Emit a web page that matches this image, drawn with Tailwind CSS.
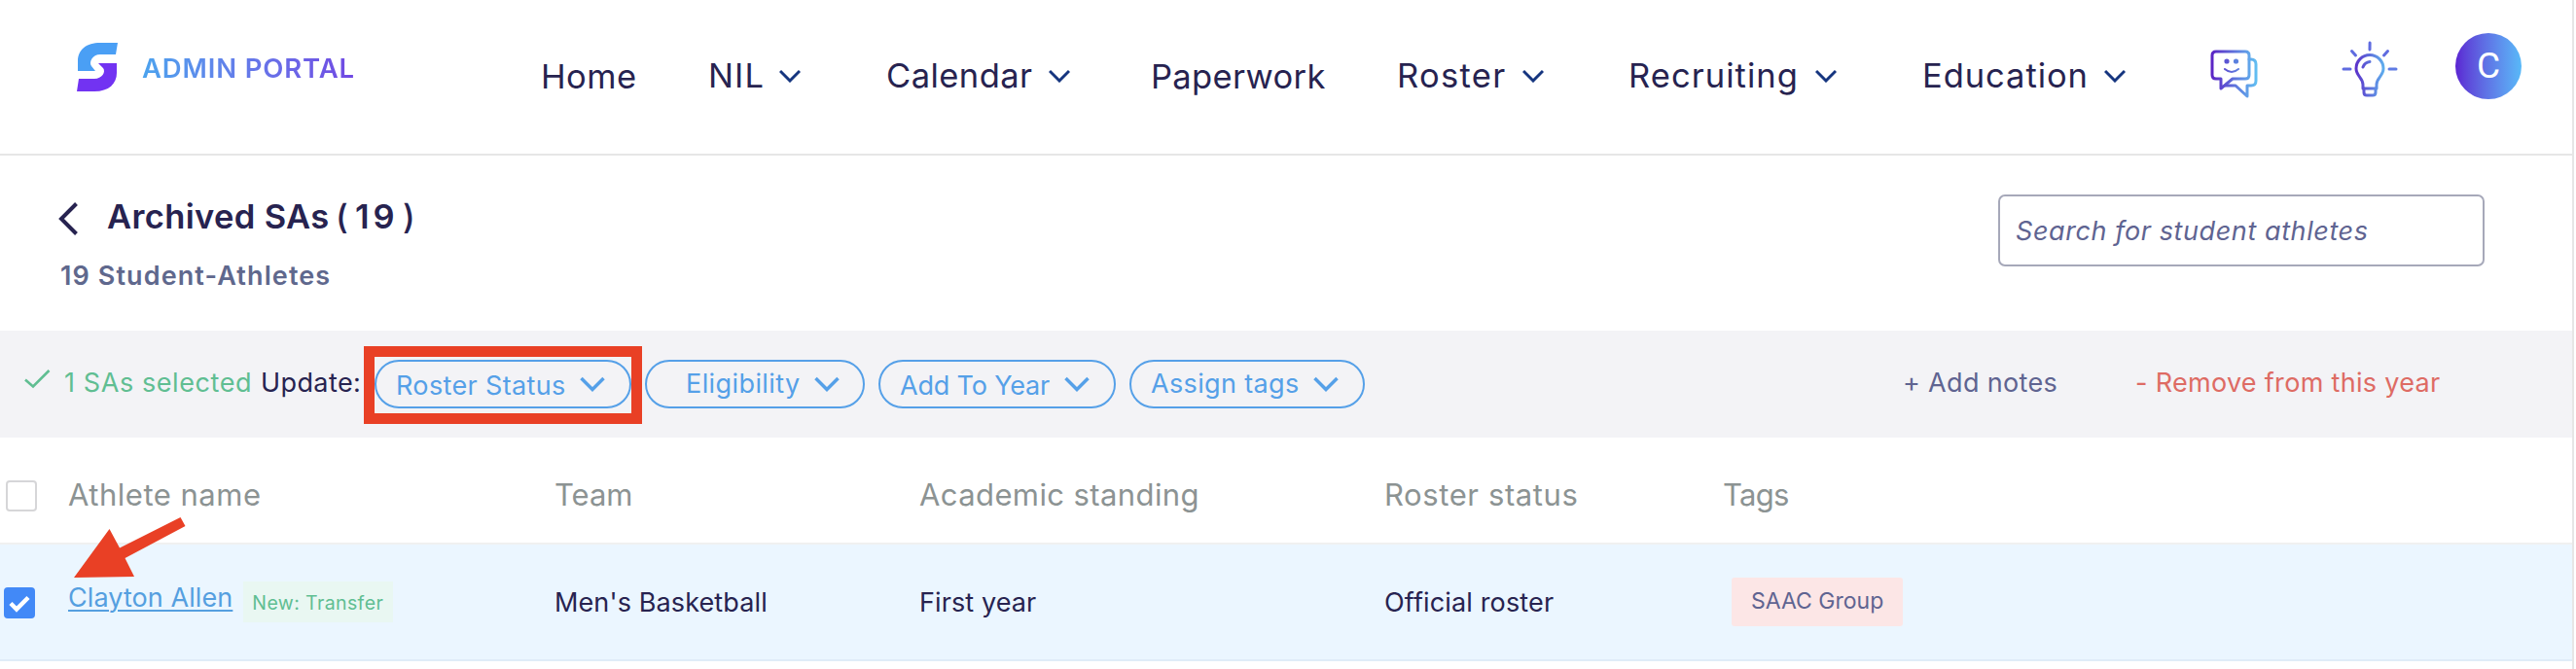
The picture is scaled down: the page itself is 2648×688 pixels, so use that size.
<!DOCTYPE html>
<html lang="en">
<head>
    <meta charset="UTF-8">
    <meta name="viewport" content="width=device-width, initial-scale=1.0">
    <title>Archived SAs - Admin Portal</title>
    <script src="https://cdn.jsdelivr.net/npm/@tailwindcss/browser@4"></script>
</head>
<body class="relative bg-white font-['Inter',sans-serif] text-[27px] leading-8 text-[#272350] whitespace-nowrap overflow-hidden">
    <div class="w-[2646px] h-[688px] border-r-2 border-[#e6e6e6]">
        <!-- Top navigation -->
        <header class="flex items-center h-40 border-b-2 border-[#e6e6e6]">
            <div class="flex items-center mb-5 ml-[78px] w-[478px]">
                <svg class="w-[44px] h-[52px]" viewBox="0 0 44 52" fill="none">
                    <path d="M43 1L41 13H25C17 13 13 21 16 25L20 30H2V20C2 8 11 1 25 1Z" fill="#4a9ff5"/>
                    <path d="M1 51L3 38H19C27 38 31 31 28 27L23 22H42V32C42 43 34 51 19 51Z" fill="#7233f2"/>
                </svg>
                <span class="ml-[24px] mt-[2px] bg-gradient-to-r from-[#4ba3ee] to-[#7047e3] bg-clip-text text-transparent text-[27.5px] font-semibold tracking-[0.85px]">ADMIN PORTAL</span>
            </div>
            <nav class="flex items-center text-[34.5px] leading-10">
                <a href="#" class="w-[172px] tracking-[0.48px]">Home</a>
                <a href="#" class="flex items-center w-[183px] mb-[3px]">
                    <span class="w-[73px] tracking-[1.12px]">NIL</span>
                    <svg class="w-[22px] h-[14px]" viewBox="0 0 22 14" fill="none" stroke="#15357f" stroke-width="3"><path d="M1 2L11 12L21 2"/></svg>
                </a>
                <a href="#" class="flex items-center w-[272px] mb-[3px]">
                    <span class="w-[167px] tracking-[0.44px]">Calendar</span>
                    <svg class="w-[22px] h-[14px]" viewBox="0 0 22 14" fill="none" stroke="#15357f" stroke-width="3"><path d="M1 2L11 12L21 2"/></svg>
                </a>
                <a href="#" class="w-[253px] tracking-[0.34px]">Paperwork</a>
                <a href="#" class="flex items-center w-[238px] mb-[3px]">
                    <span class="w-[129px] tracking-[1.3px]">Roster</span>
                    <svg class="w-[22px] h-[14px]" viewBox="0 0 22 14" fill="none" stroke="#15357f" stroke-width="3"><path d="M1 2L11 12L21 2"/></svg>
                </a>
                <a href="#" class="flex items-center w-[302px] mb-[3px]">
                    <span class="w-[192px] tracking-[1.05px]">Recruiting</span>
                    <svg class="w-[22px] h-[14px]" viewBox="0 0 22 14" fill="none" stroke="#15357f" stroke-width="3"><path d="M1 2L11 12L21 2"/></svg>
                </a>
                <a href="#" class="flex items-center w-[296px] mb-[3px]">
                    <span class="w-[187px] tracking-[0.95px]">Education</span>
                    <svg class="w-[22px] h-[14px]" viewBox="0 0 22 14" fill="none" stroke="#15357f" stroke-width="3"><path d="M1 2L11 12L21 2"/></svg>
                </a>
            </nav>
            <svg class="w-[50px] h-[50px] mb-[6px] shrink-0" viewBox="0 0 50 50" fill="none" stroke="url(#chat)" stroke-width="3" stroke-linejoin="round" stroke-linecap="round">
                <defs>
                    <linearGradient id="chat" gradientUnits="userSpaceOnUse" x1="1" y1="0" x2="48" y2="0"><stop stop-color="#5b22c4"/><stop offset="1" stop-color="#62c0f2"/></linearGradient>
                </defs>
                <path d="M6 2H36Q40 2 40 6V26Q40 30 36 30H23L11 40V30H6Q2 30 2 26V6Q2 2 6 2Z"/>
                <path d="M40 10H42Q47 10 47 15V32Q47 37 42 37H38V48L26 37H15"/>
                <path d="M15 20Q22 26 29 20" stroke-width="2"/>
                <circle cx="17" cy="12" r="2.6" fill="#5a55d4" stroke="none"/>
                <circle cx="26.500" cy="12" r="2.6" fill="#5b80de" stroke="none"/>
            </svg>
            <svg class="w-[58px] h-[58px] mb-[17px] ml-[85px] shrink-0" viewBox="0 0 58 58" fill="none" stroke="url(#bulb)" stroke-width="3" stroke-linecap="round" stroke-linejoin="round">
                <defs>
                    <linearGradient id="bulb" gradientUnits="userSpaceOnUse" x1="14" y1="0" x2="44" y2="0"><stop stop-color="#5b2fc9"/><stop offset="1" stop-color="#5fb0ee"/></linearGradient>
                </defs>
                <path d="M22 49V45C22 38 15 36 15 28.500A14 14 0 0 1 43 28.500C43 36 36 38 36 45V49Z"/>
                <path d="M23 49V53Q23 56 26 56H32Q35 56 35 53V49"/>
                <path d="M22 27Q24 22 29 21.500"/>
                <path d="M29.100 2L29 9M10.500 10.500L14.500 15M47.500 10.500L43.500 15" stroke="#5f6be0"/>
                <path d="M2 29H9" stroke="#5f6be0"/>
                <path d="M49 29H56" stroke="#5f7be4"/>
            </svg>
            <div class="flex items-center justify-center w-[68px] h-[68px] mb-[22px] ml-[59px] rounded-full bg-gradient-to-r from-[#5b22d2] to-[#58b9f8] text-white text-[37px] shrink-0 font-['Roboto',sans-serif]">C</div>
        </header>

        <!-- Page title and search -->
        <section class="flex h-[180px]">
            <div class="pl-[60px] pt-[43px] w-[2054px]">
                <div class="flex items-center h-10 text-[34.5px] font-semibold">
                    <svg class="w-[20px] h-[34px] mt-[3px]" viewBox="0 0 20 34" fill="none" stroke="#272350" stroke-width="4"><path d="M18.500 1.500L3 17L18.500 32.500"/></svg>
                    <h1 class="flex ml-[30px]">
                        <span class="w-[235px] tracking-[0.35px]">Archived SAs</span>
                        <span class="w-[20px] font-medium">(</span>
                        <span class="w-[49px] tracking-[4px]">19</span>
                        <span class="font-medium">)</span>
                    </h1>
                </div>
                <p class="mt-[25px] pl-[2px] text-[#5f688d] font-semibold tracking-[1.1px]">19 Student-Athletes</p>
            </div>
            <div class="flex items-center w-[500px] h-[74px] mt-10 px-[16px] pt-[2px] rounded-[7px] border-2 border-[#a6a8b9] text-[#5f6491] italic tracking-[0.58px]">Search for student athletes</div>
        </section>

        <!-- Bulk actions -->
        <section class="flex items-center h-[110px] bg-[#f3f3f6]">
            <svg class="w-[27px] h-[20px] ml-[25px] mb-[11px]" viewBox="0 0 27 20" fill="none" stroke="#60be92" stroke-width="2.6"><path d="M1 10.500L9 17.500L25.500 1"/></svg>
            <span class="w-[200px] ml-[14px] mb-[3px] text-[#60be92] tracking-[0.59px]">1 SAs selected</span>
            <span class="w-[117px] ml-[2px] mb-[2px] tracking-[0.4px]">Update:</span>
            <button class="relative flex items-center w-[264px] h-[50px] pl-[20px] border-2 border-[#55a0e8] rounded-[25px] text-[#55a0e8]">
                <span class="w-[189px] mt-[3px] text-left tracking-[0.36px]">Roster Status</span>
                <svg class="w-[26px] h-[16px]" viewBox="0 0 26 16" fill="none" stroke="#55a0e8" stroke-width="3.500"><path d="M1.500 2L13 13.500L24.500 2"/></svg>
                <!-- Highlight frame around the roster status menu -->
                <span class="absolute -left-[13px] -top-[16px] w-[286px] h-[80px] border-[11px] border-[#e94025]"></span>
            </button>
            <button class="flex items-center w-[226px] h-[50px] ml-[14px] pl-[40px] border-2 border-[#55a0e8] rounded-[25px] text-[#55a0e8]">
                <span class="w-[132px] mb-px text-left tracking-[0.41px]">Eligibility</span>
                <svg class="w-[26px] h-[16px]" viewBox="0 0 26 16" fill="none" stroke="#55a0e8" stroke-width="3.500"><path d="M1.500 2L13 13.500L24.500 2"/></svg>
            </button>
            <button class="flex items-center w-[244px] h-[50px] ml-[14px] pl-[20px] border-2 border-[#55a0e8] rounded-[25px] text-[#55a0e8]">
                <span class="w-[169px] mt-[3px] text-left tracking-[-0.18px]">Add To Year</span>
                <svg class="w-[26px] h-[16px]" viewBox="0 0 26 16" fill="none" stroke="#55a0e8" stroke-width="3.500"><path d="M1.500 2L13 13.500L24.500 2"/></svg>
            </button>
            <button class="flex items-center w-[242px] h-[50px] ml-[14px] pl-[20px] border-2 border-[#55a0e8] rounded-[25px] text-[#55a0e8]">
                <span class="w-[167px] mb-px text-left tracking-[0.35px]">Assign tags</span>
                <svg class="w-[26px] h-[16px]" viewBox="0 0 26 16" fill="none" stroke="#55a0e8" stroke-width="3.500"><path d="M1.500 2L13 13.500L24.500 2"/></svg>
            </button>
            <span class="w-[239px] ml-[553px] mb-[2px] text-[#5f6491] tracking-[0.33px]">+ Add notes</span>
            <span class="mb-[2px] text-[#de6b64] tracking-[0.31px]">- Remove from this year</span>
        </section>

        <!-- Athletes table -->
        <section class="relative">
            <div class="grid grid-cols-[70px_500px_374px_479px_348px_1fr] items-center h-[110px] pt-[9px] border-b-2 border-[#f0f0f0] text-[31px] text-[#8c9393]">
                <span class="w-8 h-8 ml-[6px] mt-[3px] rounded-[4px] border-2 border-[#d6d6d8]"></span>
                <span class="tracking-[0.51px]">Athlete name</span>
                <span>Team</span>
                <span class="pl-[1px] tracking-[0.4px]">Academic standing</span>
                <span class="tracking-[0.6px]">Roster status</span>
                <span class="tracking-[-0.72px]">Tags</span>
            </div>
            <div class="grid grid-cols-[70px_500px_375px_478px_357px_1fr] items-center h-[120px] pb-px border-b-2 border-[#dfecf8] bg-[#ebf6ff]">
                <span class="flex items-center justify-center w-8 h-8 ml-[4px] mt-[2px] rounded-[4px] bg-[#4289f7]">
                    <svg class="w-[22px] h-[18px] mt-[2px]" viewBox="0 0 22 18" fill="none" stroke="#fff" stroke-width="4.500"><path d="M2 8.500L8 14.500L20 2.500"/></svg>
                </span>
                <div class="flex items-center">
                    <a href="#" class="mb-[8px] text-[#559fe0] tracking-[0.08px] underline decoration-2 underline-offset-[3px]">Clayton Allen</a>
                    <span class="w-[154px] h-[42px] ml-[11px] pt-px pl-[9px] bg-[#e9f7f2] text-[19.5px] leading-[42px] text-[#60be92] tracking-[0.39px]">New: Transfer</span>
                </div>
                <span class="mt-[3px] tracking-[0.12px]">Men's Basketball</span>
                <span class="mt-[3px] tracking-[0.1px]">First year</span>
                <span class="mt-[3px] tracking-[0.15px]">Official roster</span>
                <span class="w-[176px] h-[50px] pl-[20px] rounded-[3px] bg-[#fce6e6] text-[23px] leading-[48px] text-[#5f6491]">SAAC Group</span>
            </div>
            <!-- Arrow pointing at the selected athlete -->
            <svg class="absolute left-[76px] top-[81px] w-[116px] h-[64px]" viewBox="0 0 116 64" fill="#e94025">
                <path d="M0 63L36.500 13L47 32.500L109.500 1L114.500 10L52.500 43L62 62Z"/>
            </svg>
        </section>
    </div>
</body>
</html>
